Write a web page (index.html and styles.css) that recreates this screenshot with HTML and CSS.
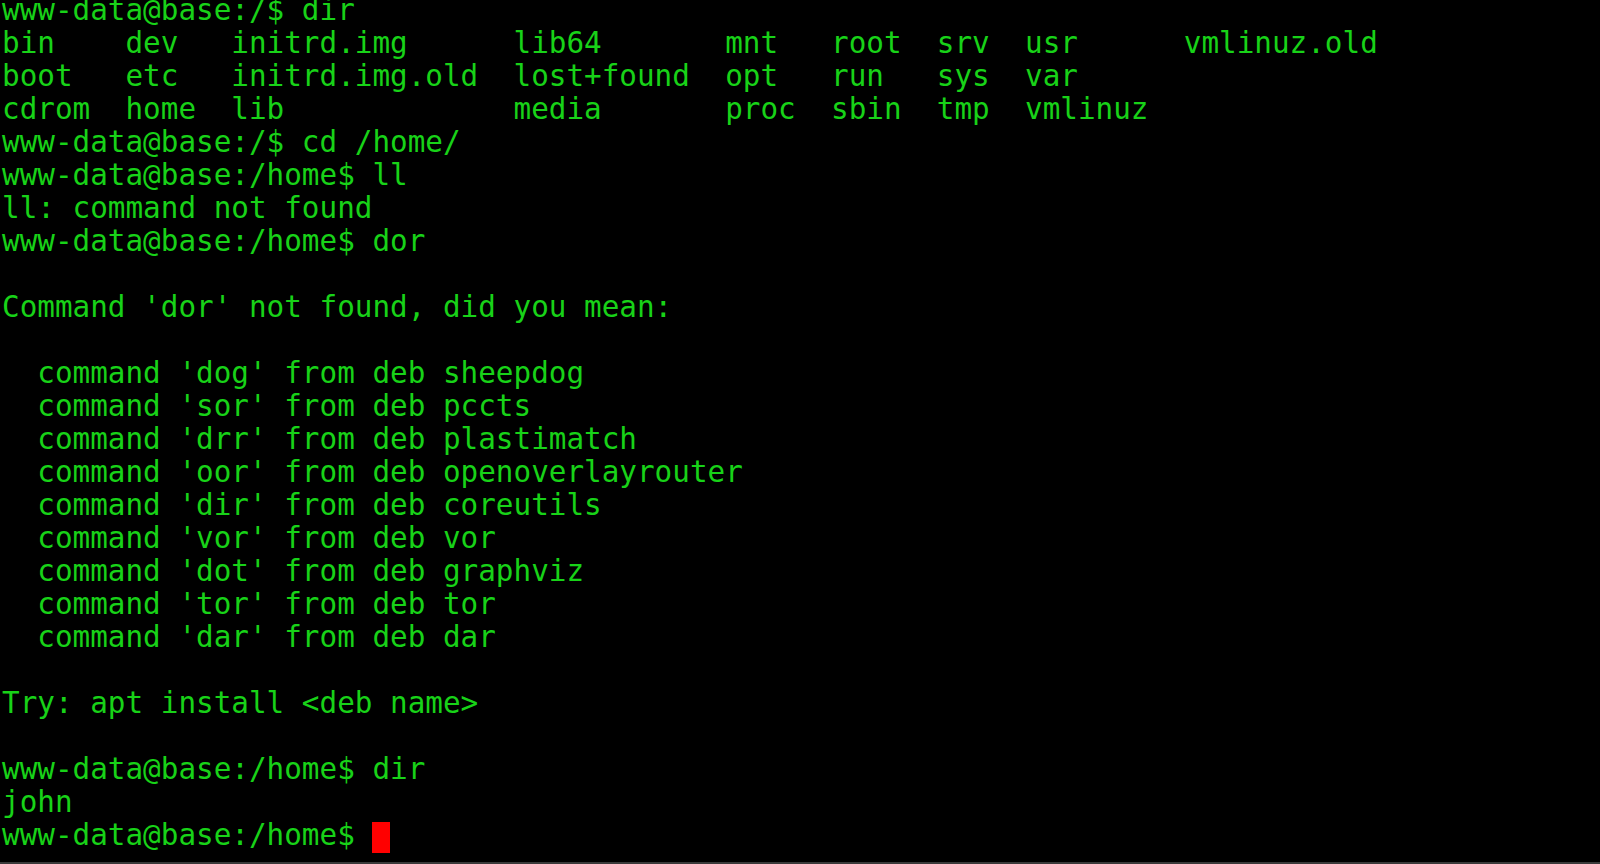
FILE: index.html
```html
<!DOCTYPE html>
<html>
<head>
<meta charset="utf-8">
<link rel="stylesheet" href="styles.css">
</head>
<body>
<div class="term">
<pre class="out">www-data@base:/$ dir
bin    dev   initrd.img      lib64       mnt   root  srv  usr      vmlinuz.old
boot   etc   initrd.img.old  lost+found  opt   run   sys  var
cdrom  home  lib             media       proc  sbin  tmp  vmlinuz
www-data@base:/$ cd /home/
www-data@base:/home$ ll
ll: command not found
www-data@base:/home$ dor

Command 'dor' not found, did you mean:

  command 'dog' from deb sheepdog
  command 'sor' from deb pccts
  command 'drr' from deb plastimatch
  command 'oor' from deb openoverlayrouter
  command 'dir' from deb coreutils
  command 'vor' from deb vor
  command 'dot' from deb graphviz
  command 'tor' from deb tor
  command 'dar' from deb dar

Try: apt install &lt;deb name&gt;

www-data@base:/home$ dir
john
www-data@base:/home$ <span class="cursor"></span></pre>
</div>
</body>
</html>
```
FILE: styles.css
```css
html, body {
  margin: 0;
  padding: 0;
  background: #000;
}
.term {
  width: 1600px;
  height: 864px;
  box-sizing: border-box;
  overflow: hidden;
  background: #000;
  border-bottom: 2px solid #3a3a3a;
}
.out {
  margin: -6.5px 0 0 0;
  padding: 0 0 0 2px;
  font-family: "DejaVu Sans Mono", monospace;
  font-size: 29.3px;
  line-height: 33px;
  color: #18d218;
  white-space: pre;
}
.cursor {
  display: inline-block;
  width: 18px;
  height: 31px;
  background: #ff0000;
  vertical-align: -8px;
}
```
